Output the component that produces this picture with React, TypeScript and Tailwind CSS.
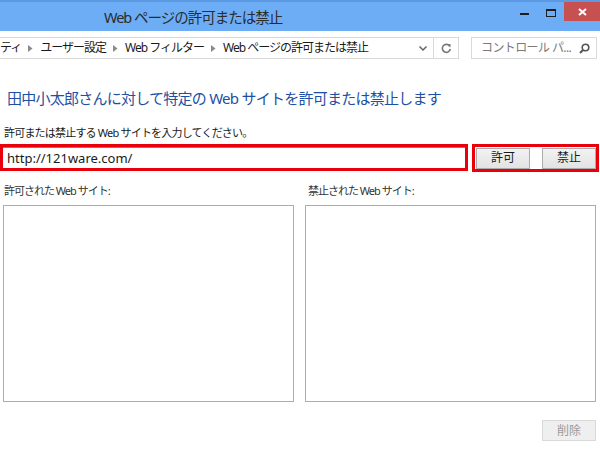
import React from "react";

const F = "font-['Noto_Sans','Noto_Sans_CJK_JP',sans-serif]";

function Tri() {
  return (
    <svg width="5" height="7" viewBox="0 0 5 7" className="mx-[7px] shrink-0">
      <path d="M0 0 L4.5 3.5 L0 7 Z" fill="#8a8a8a" />
    </svg>
  );
}

export default function App() {
  return (
    <div className={`w-[600px] h-[450px] bg-white overflow-hidden flex flex-col ${F} text-[#1a1a1a]`}>
      {/* Title bar */}
      <div className="h-[31px] bg-[#6cadf5] border-t-2 border-[#5b9ae2] flex items-start shrink-0">
        <div className="pl-[104px] pt-[5px] text-[14.5px] leading-[20px] tracking-[-1px] text-[#2b2b2b] flex-1 whitespace-nowrap">
          Web ページの許可または禁止
        </div>
        <div className="w-[26px] h-[19px] flex items-center justify-start">
          <div className="w-[9px] h-[2px] bg-[#1e1e1e] mt-[4px]" />
        </div>
        <div className="w-[18px] h-[19px] flex items-center">
          <div className="w-[10px] h-[8px] border border-[#1e1e1e] border-t-2 mt-[2px]" />
        </div>
        <div className="w-[36px] h-[19px] bg-[#c75050] flex items-center justify-center">
          <svg width="9" height="8" viewBox="0 0 9 8">
            <path d="M1 1 L8 7 M8 1 L1 7" stroke="white" strokeWidth="2" />
          </svg>
        </div>
      </div>

      {/* Address bar */}
      <div className="flex items-start mt-[6px] h-[22px] shrink-0">
        <div className="w-[459px] h-[22px] border border-[#d9d9d9] border-l-0 flex items-center">
          <div className="flex-1 h-full flex items-center text-[12px] tracking-[-1px] whitespace-nowrap overflow-hidden leading-[16px]">
            <span>ティ</span>
            <Tri />
            <span>ユーザー設定</span>
            <Tri />
            <span>Web フィルター</span>
            <Tri />
            <span>Web ページの許可または禁止</span>
          </div>
          <div className="w-[20px] h-full flex items-center justify-center">
            <svg width="8" height="5" viewBox="0 0 8 5">
              <path d="M0.5 0.5 L4 4 L7.5 0.5" stroke="#666" strokeWidth="1.5" fill="none" />
            </svg>
          </div>
          <div className="w-[25px] h-full border-l border-[#d9d9d9] flex items-center justify-center">
            <svg width="11" height="11" viewBox="0 0 11 11">
              <path d="M8.6 3 A4 4 0 1 0 9.3 6" stroke="#777" strokeWidth="1.6" fill="none" />
              <path d="M6.2 1.5 L9.6 1 L9.4 4.5 Z" fill="#777" />
            </svg>
          </div>
        </div>
        <div className="ml-[12px] w-[126px] h-[22px] border border-[#d9d9d9] flex items-center pl-[9px] pr-[6px]">
          <span className="flex-1 text-[12px] tracking-[-0.6px] text-[#7a7a7a] leading-[16px] whitespace-nowrap">コントロール パ...</span>
          <svg width="11" height="11" viewBox="0 0 11 11">
            <circle cx="6.5" cy="4.5" r="3.3" stroke="#555" strokeWidth="1.6" fill="none" />
            <path d="M4.2 6.8 L1 10" stroke="#555" strokeWidth="2" />
          </svg>
        </div>
      </div>

      {/* Heading */}
      <div className="mt-[30px] pl-[7px] text-[15px] leading-[18px] tracking-[-0.75px] text-[#1e4fa3] whitespace-nowrap">
        田中小太郎さんに対して特定の Web サイトを許可または禁止します
      </div>

      <div className="mt-[19px] pl-[4px] text-[11px] leading-[14px] tracking-[-0.8px] whitespace-nowrap">
        許可または禁止する Web サイトを入力してください。
      </div>

      {/* Input row */}
      <div className="mt-[4px] flex items-start h-[28px]">
        <div className="w-[468px] h-[27px] border-[3px] border-[#e8000b] flex">
          <div className="flex-1 border-t border-[#3c8ee8] pl-[4px] flex items-center text-[13px] leading-none">
            http://121ware.com/
          </div>
        </div>
        <div className="ml-[4px] w-[127px] h-[28px] border-[3px] border-[#e8000b] flex items-center pl-[1px] gap-[12px]">
          <button className="w-[54px] h-[21px] border border-[#acacac] bg-gradient-to-b from-[#f2f2f2] to-[#e3e3e3] text-[12px] leading-none">
            許可
          </button>
          <button className="w-[54px] h-[21px] border border-[#acacac] bg-gradient-to-b from-[#f2f2f2] to-[#e3e3e3] text-[12px] leading-none">
            禁止
          </button>
        </div>
      </div>

      {/* Lists */}
      <div className="mt-[12px] flex pl-[3px] pr-[4px] gap-[11px]">
        <div className="flex-1 flex flex-col">
          <div className="pl-[1px] text-[11px] leading-[14px] tracking-[-1px] text-[#333] h-[21px] whitespace-nowrap">許可された Web サイト:</div>
          <div className="h-[197px] border border-[#abadb3]" />
        </div>
        <div className="flex-1 flex flex-col">
          <div className="pl-[3px] text-[11px] leading-[14px] tracking-[-1px] text-[#333] h-[21px] whitespace-nowrap">禁止された Web サイト:</div>
          <div className="h-[197px] border border-[#abadb3]" />
        </div>
      </div>

      <div className="mt-[18px] flex justify-end pr-[4px]">
        <div className="w-[54px] h-[21px] border border-[#d9d9d9] bg-[#efefef] text-[12px] leading-none text-[#9a9a9a] flex items-center justify-center">
          削除
        </div>
      </div>
    </div>
  );
}
